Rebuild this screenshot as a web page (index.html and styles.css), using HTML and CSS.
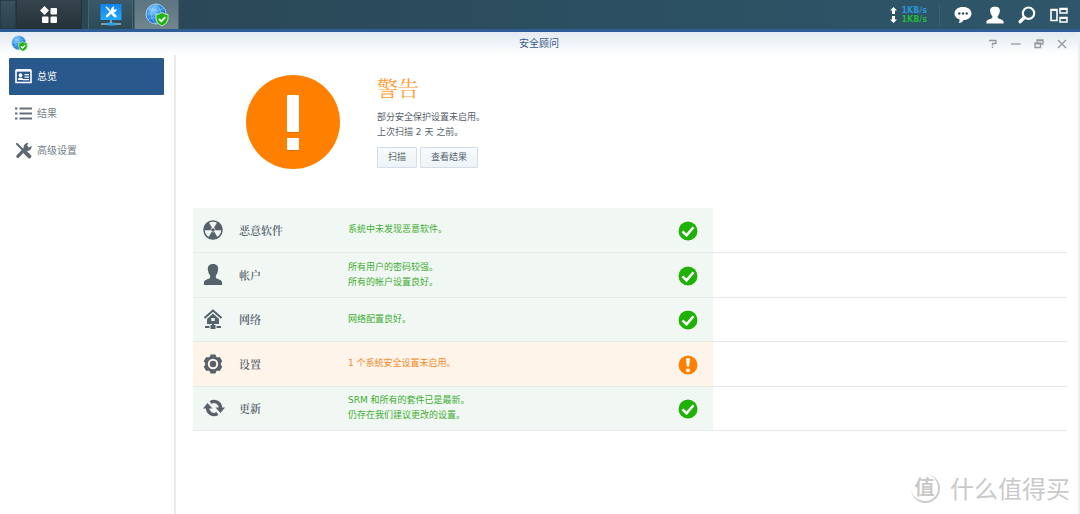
FILE: index.html
```html
<!DOCTYPE html>
<html lang="zh-CN">
<head>
<meta charset="utf-8">
<title>安全顾问</title>
<link rel="stylesheet" href="styles.css">
</head>
<body>
<svg class="defs" width="0" height="0" aria-hidden="true">
  <defs>
    <radialGradient id="globe" cx="35%" cy="30%" r="75%"><stop offset="0" stop-color="#8fd0fa"/><stop offset=".5" stop-color="#2f8fe6"/><stop offset="1" stop-color="#1163c4"/></radialGradient>
    <linearGradient id="screen" x1="0" y1="0" x2="0" y2="1"><stop offset="0" stop-color="#1183f0"/><stop offset="1" stop-color="#25a8fb"/></linearGradient>
    <symbol id="advisor" viewBox="0 0 24 24">
      <circle cx="11" cy="11" r="10" fill="url(#globe)" stroke="#b5dcf7" stroke-width=".8"/>
      <path d="M11 1v20M1 11h20M3 5.500q8 4 16 0M3 16.500q8-4 16 0M11 1q-10 10 0 20M11 1q10 10 0 20" fill="none" stroke="#9fd2f8" stroke-width=".5"/>
      <path d="M17 9.500q3 2 6 2v4.500q0 4.500-6 7-6-2.500-6-7v-4.500q3 0 6-2z" fill="#22b314" stroke="#dcf5d5" stroke-width=".8"/>
      <path d="M14 16l2.300 2.300 4-4.300" fill="none" stroke="#fff" stroke-width="1.800"/>
    </symbol>
    <symbol id="tools" viewBox="0 0 18 18">
      <path d="M2 2l6 6" stroke="currentColor" stroke-width="2.200" stroke-linecap="round"/>
      <path d="M11 11l4.200 4.200" stroke="currentColor" stroke-width="4.200" stroke-linecap="round"/>
      <path d="M3 15.200l9.500-9.700" stroke="currentColor" stroke-width="3.400" stroke-linecap="round"/>
      <path d="M17.500 4l-3 2-2-1.700 1.700-3.400a4.800 4.800 0 0 0-5 6l3 2.700A4.800 4.800 0 0 0 17.500 4z" fill="currentColor"/>
    </symbol>
    <symbol id="person" viewBox="0 0 20 22">
      <path d="M10 0c4.300 0 5.800 2.500 5.300 6.200-.3 2.600-1.200 4.500-2.300 5.800v2.500c1 1.500 6 2 6.500 4.500v3H.5v-3c.5-2.500 5.500-3 6.500-4.500V12C5.900 10.700 5 8.800 4.700 6.200 4.200 2.500 5.700 0 10 0z" fill="currentColor"/>
    </symbol>
    <symbol id="ok" viewBox="0 0 22 22">
      <circle cx="11" cy="11.500" r="10.500" fill="#e3e9e4"/><circle cx="11" cy="11" r="10.500" fill="#fff"/><circle cx="11" cy="11" r="9.500" fill="#1fb105"/>
      <path d="M5.500 11.300l4 4 7-8" fill="none" stroke="#fff" stroke-width="2.500"/>
    </symbol>
    <symbol id="warn" viewBox="0 0 22 22">
      <circle cx="11" cy="11.500" r="10.500" fill="#eee3da"/><circle cx="11" cy="11" r="10.500" fill="#fff"/><circle cx="11" cy="11" r="9.500" fill="#ff8000"/>
      <path d="M9 4.500q2-1 4 0l-.9 8.300H9.900z" fill="#fff"/><circle cx="11" cy="16.300" r="1.900" fill="#fff"/>
    </symbol>
  </defs>
</svg>

<header class="taskbar">
  <div class="taskbar-edge"></div>
  <button class="task task-menu" aria-label="主菜单">
    <svg width="18" height="18" viewBox="0 0 18 18" fill="#fff"><path d="M4.500 0L9 4.500 4.500 9 0 4.500z"/><rect x="10.500" y="2" width="6.500" height="6.500" rx="1"/><rect x="2" y="10.500" width="6.500" height="6.500" rx="1"/><rect x="10.500" y="10.500" width="6.500" height="6.500" rx="1"/></svg>
  </button>
  <button class="task task-network" aria-label="网络中心">
    <svg width="22" height="22" viewBox="0 0 22 22"><rect x=".5" y="0" width="21" height="16" fill="url(#screen)"/><use href="#tools" x="5" y="2" width="12" height="12" color="#fff"/><path d="M1 20h20" stroke="#9cb7c6" stroke-width="1.500"/><path d="M7 20h8" stroke="#25a3ed" stroke-width="3"/><path d="M11 16v3" stroke="#ddeaf0" stroke-width="1"/></svg>
  </button>
  <button class="task task-active" aria-label="安全顾问"><svg width="24" height="24"><use href="#advisor"/></svg></button>
  <div class="tray">
    <div class="speed">
      <span class="rate up"><svg width="7" height="7" viewBox="0 0 7 7"><path d="M3.500 0L7 3.500H5V7H2V3.500H0z" fill="#fff"/></svg>1KB/s</span>
      <span class="rate down"><svg width="7" height="7" viewBox="0 0 7 7"><path d="M3.500 7L0 3.500h2V0h3v3.500h2z" fill="#fff"/></svg>1KB/s</span>
    </div>
    <button class="tray-button" aria-label="通知"><svg width="18" height="18" viewBox="0 0 18 18"><path d="M9 1c5 0 8.500 2.700 8.500 6.500S14 14 9.500 14q-1 3-5 3 1.500-1.500 1-3.500C2.500 12.500.5 10.500.5 7.500.5 3.700 4 1 9 1z" fill="#fff"/><circle cx="5.300" cy="7.500" r="1.200" fill="#2c5062"/><circle cx="9" cy="7.500" r="1.200" fill="#2c5062"/><circle cx="12.700" cy="7.500" r="1.200" fill="#2c5062"/></svg></button>
    <button class="tray-button" aria-label="用户"><svg width="18" height="18" viewBox="0 0 20 22" preserveAspectRatio="none"><path d="M10 1c4.300 0 5.800 2.500 5.300 5.700-.3 2.600-1.200 4.500-2.300 5.800v2c1 1.500 6 2 6.500 4.500v2.500H.5V19c.5-2.500 5.500-3 6.500-4.500v-2C5.900 11.200 5 9.300 4.700 6.700 4.200 3.500 5.700 1 10 1z" fill="#fff"/></svg></button>
    <button class="tray-button" aria-label="搜索"><svg width="18" height="18" viewBox="0 0 18 18" fill="none" stroke="#fff"><circle cx="10.500" cy="7.200" r="5.700" stroke-width="2.200"/><path d="M6.200 11.500L2.200 15.700" stroke-width="3.400" stroke-linecap="round"/></svg></button>
    <button class="tray-button" aria-label="小工具"><svg width="18" height="18" viewBox="0 0 18 18" fill="none" stroke="#fff"><path d="M1 3.500h6v11H1z" stroke-width="1.600"/><path d="M10 2.500h7v4.500h-7zM10 11.500h7V16h-7z" stroke-width="1.500"/><path d="M10 3h7M10 12h7M1 4h6" stroke-width="1.800"/></svg></button>
  </div>
</header>

<div class="window">
  <div class="titlebar">
    <svg class="title-icon" width="17" height="17"><use href="#advisor"/></svg>
    <h1 class="title">安全顾问</h1>
    <div class="controls">
      <button class="control" aria-label="帮助"><svg width="10" height="10" viewBox="0 0 10 10"><path d="M1 1.500h7v3H4.500v2M4.500 7.500V9"/></svg></button>
      <button class="control" aria-label="最小化"><svg width="10" height="10" viewBox="0 0 10 10"><path d="M0 5h9.500"/></svg></button>
      <button class="control" aria-label="还原"><svg width="10" height="10" viewBox="0 0 10 10"><path d="M3 3V1h6v4H7M1 4h5.500v4.500H1zM1 4.800h5.500M3 1.500h6"/></svg></button>
      <button class="control" aria-label="关闭"><svg width="10" height="10" viewBox="0 0 10 10"><path d="M1 1l8 8M9 1L1 9"/></svg></button>
    </div>
  </div>

  <div class="body">
    <nav class="sidebar">
      <a class="nav-item selected" href="#overview"><svg width="17" height="17" viewBox="0 0 17 17"><path d="M1 2.500h15v12H1z" fill="none" stroke="#fff" stroke-width="1.600"/><path d="M1 2.300h15" stroke="#fff" stroke-width="2.400"/><circle cx="5.500" cy="7.200" r="1.900" fill="#fff"/><path d="M2.800 12q0-2.500 2.700-2.500T8.200 12zM9.500 6H14v1.300H9.500zM9.500 8.500H14v1.300H9.500zM8 11h6v1.200H8z" fill="#fff"/></svg>总览</a>
      <a class="nav-item" href="#results"><svg width="17" height="17" viewBox="0 0 17 17" fill="none" stroke="#66717c" stroke-width="2"><path d="M0 3.500h2.500M0 8.500h2.500M0 13.500h2.500M4.500 3.500H17M4.500 8.500H17M4.500 13.500H17"/></svg>结果</a>
      <a class="nav-item" href="#advanced"><svg width="17" height="17" color="#5d6873"><use href="#tools"/></svg>高级设置</a>
    </nav>

    <main class="content" id="overview">
      <section class="summary">
        <svg class="alert" width="94" height="94" viewBox="0 0 94 94"><circle cx="47" cy="47" r="47" fill="#ff8000"/><path d="M41 22h12v36H41zM41 65h12v11H41z" fill="#b9640f" opacity=".5"/><rect x="41" y="20" width="12" height="37" rx="1" fill="#fff"/><rect x="41" y="63" width="12" height="12" rx="1" fill="#fff"/></svg>
        <div class="summary-text">
          <h2 class="status">警告</h2>
          <p class="detail">部分安全保护设置未启用。<br>上次扫描 2 天 之前。</p>
          <div class="actions"><button class="button">扫描</button><button class="button">查看结果</button></div>
        </div>
      </section>

      <table class="checks">
        <tbody>
          <tr class="check">
            <td class="icon"><svg width="20" height="20" viewBox="0 0 20 20"><circle cx="10" cy="10" r="9" fill="#f1f8f3" stroke="currentColor" stroke-width="1.500"/><path d="M8.700 7.750L5.500 2.200A9 9 0 0 0 1 10h6.400A2.600 2.600 0 0 1 8.700 7.750zM11.300 7.750L14.500 2.200A9 9 0 0 1 19 10h-6.400a2.600 2.600 0 0 0-1.300-2.250zM8.700 12.250L5.500 17.800a9 9 0 0 0 9 0l-3.200-5.550a2.600 2.600 0 0 1-2.600 0z" fill="currentColor" stroke="currentColor" stroke-width=".6"/><circle cx="10" cy="10" r="1.800" fill="currentColor"/></svg></td>
            <th class="name" scope="row">恶意软件</th><td class="message">系统中未发现恶意软件。</td>
            <td class="mark"><svg width="22" height="22" role="img" aria-label="正常"><use href="#ok"/></svg></td><td class="rest"></td>
          </tr>
          <tr class="check">
            <td class="icon"><svg width="20" height="21"><use href="#person"/></svg></td>
            <th class="name" scope="row">帐户</th><td class="message">所有用户的密码较强。<br>所有的帐户设置良好。</td>
            <td class="mark"><svg width="22" height="22" role="img" aria-label="正常"><use href="#ok"/></svg></td><td class="rest"></td>
          </tr>
          <tr class="check">
            <td class="icon"><svg width="20" height="20" viewBox="0 0 20 20"><path d="M1.500 9L10 1.500 18.500 9" fill="none" stroke="currentColor" stroke-width="2"/><path d="M10 4.500l6 5.500v5H4v-5z" fill="currentColor"/><path d="M8.300 9h3.400v3H8.300z" fill="#f1f8f3"/><path d="M10 14v3M2 18h4.500M13.500 18H18" fill="none" stroke="currentColor" stroke-width="2"/><path d="M7.500 16h5v4h-5z" fill="currentColor"/></svg></td>
            <th class="name" scope="row">网络</th><td class="message">网络配置良好。</td>
            <td class="mark"><svg width="22" height="22" role="img" aria-label="正常"><use href="#ok"/></svg></td><td class="rest"></td>
          </tr>
          <tr class="check warning">
            <td class="icon"><svg width="20" height="20" viewBox="0 0 20 20"><path d="M7.500.5h5l.5 2 1.800 1 2-.5 2.500 4.300L17.900 9v2l1.400 1.700-2.500 4.300-2-.5-1.800 1-.5 2h-5l-.5-2-1.800-1-2 .5L.7 12.700 2.100 11V9L.7 7.300 3.200 3l2 .5 1.800-1z" fill="currentColor"/><circle cx="10" cy="10" r="4.200" fill="none" stroke="#fff4ea" stroke-width="2"/></svg></td>
            <th class="name" scope="row">设置</th><td class="message">1 个系统安全设置未启用。</td>
            <td class="mark"><svg width="22" height="22" role="img" aria-label="警告"><use href="#warn"/></svg></td><td class="rest"></td>
          </tr>
          <tr class="check">
            <td class="icon"><svg width="22" height="18" viewBox="0 0 22 18"><path d="M7.500 3.500A6.500 6.500 0 0 1 17.500 9M14.500 14.500A6.500 6.500 0 0 1 4.500 9" fill="none" stroke="currentColor" stroke-width="3.400"/><path d="M12.500 8.500H22L17.500 14zM0 9.500h9.500L4.500 4z" fill="currentColor"/></svg></td>
            <th class="name" scope="row">更新</th><td class="message">SRM 和所有的套件已是最新。<br>仍存在我们建议更改的设置。</td>
            <td class="mark"><svg width="22" height="22" role="img" aria-label="正常"><use href="#ok"/></svg></td><td class="rest"></td>
          </tr>
        </tbody>
      </table>
    </main>
  </div>
</div>
<div class="watermark"><span class="seal">值</span><span>什么值得买</span></div>
</body>
</html>
```
FILE: styles.css
```css
* { box-sizing: border-box; }

body {
  margin: 0;
  min-height: 100vh;
  display: flex;
  flex-direction: column;
  background: #fff;
  color: #56616c;
  font: 9px/15px "DejaVu Sans", "Noto Sans CJK SC", sans-serif;
}

svg { display: block; flex: none; }
button { font: inherit; color: inherit; cursor: pointer; }
h1, h2, p { margin: 0; font-weight: normal; }
.defs { position: absolute; }

.taskbar {
  display: flex;
  height: 32px;
  border-bottom: 3px solid #2d5c96;
  background: linear-gradient(90deg, #2a4553, #2c5062 60%, #2f566a);
}
.taskbar-edge {
  width: 16px;
  border: 1px solid #243c48;
  background: linear-gradient(#39525e, #2a424e);
}
.task {
  display: flex;
  align-items: center;
  justify-content: center;
  padding: 0;
  border: 1px solid #486370;
  border-width: 0 1px;
  background: linear-gradient(#3c5967, #2c4a58);
}
.task-menu {
  width: 66px;
  border-color: #22333c;
  background: linear-gradient(#36444d, #253139);
}
.task-network { width: 45px; margin-left: 6px; }
.task-active { width: 45px; margin-left: 1px; background: linear-gradient(#5b7581, #71858e); }

.tray {
  display: flex;
  align-items: center;
  margin-left: auto;
  padding-right: 12px;
  gap: 14px;
}
.speed {
  display: flex;
  flex-direction: column;
  height: 22px;
  justify-content: center;
  padding-right: 12px;
  border-right: 1px solid #3a6072;
  font: bold 8px/9px "DejaVu Sans", sans-serif;
}
.rate { display: flex; align-items: center; gap: 4px; }
.up { color: #2c93d2; }
.down { color: #24b53b; }
.tray-button { padding: 0; border: 0; background: none; color: #fff; }

.window {
  flex: 1;
  display: flex;
  flex-direction: column;
  border-right: 2px solid #eceff2;
}
.titlebar {
  display: grid;
  grid-template-columns: 1fr auto 1fr;
  align-items: center;
  height: 23px;
  padding: 0 11px;
  background: linear-gradient(#e3eaf2, #fff);
}
.title { color: #34578c; font-size: 10px; line-height: 16px; }
.controls { display: flex; justify-content: flex-end; gap: 13px; }
.control { padding: 0; border: 0; background: none; }
.control path { fill: none; stroke: #93999f; stroke-width: 1.3; }

.body { flex: 1; display: flex; }
.sidebar {
  width: 176px;
  padding: 3px 10px 0 9px;
  border-right: 2px solid #ebebeb;
}
.nav-item {
  display: flex;
  align-items: center;
  gap: 5px;
  height: 37px;
  padding-left: 6px;
  border-radius: 1px;
  color: #737d86;
  font-size: 10px;
  text-decoration: none;
}
.selected { background: #29588c; color: #fff; }

.content { flex: 1; padding: 18px 11px 0 17px; }
.summary { display: flex; gap: 37px; height: 135px; padding: 2px 0 0 53px; }
.status {
  color: #ff9a2e;
  font: 400 21px/24px "Noto Serif CJK SC", "Noto Sans CJK SC", serif;
}
.detail { margin-top: 11px; }
.actions { display: flex; gap: 3px; margin-top: 7px; }
.button {
  height: 21px;
  padding: 0 10px;
  border: 1px solid #d3dee9;
  border-radius: 1px;
  background: linear-gradient(#f8fbfd, #edf3f8);
}

.checks { width: 100%; border-collapse: collapse; table-layout: fixed; }
.check { height: 44px; background: linear-gradient(#f1f8f3, #f1f8f3) no-repeat; background-size: 520px 100%; }
.check:nth-child(even) { height: 45px; }
.warning { background-image: linear-gradient(#fff4ea, #fff4ea); }
.check td, .check th { padding: 0; border-bottom: 1px solid #e5e9ec; text-align: left; }
.check .icon { width: 46px; padding-left: 10px; }
.check .name {
  width: 109px;
  font: 600 11px/16px "Noto Serif CJK SC", "Noto Sans CJK SC", serif;
}
.message { width: 325px; color: #40ac32; }
.warning .message { color: #ee8a2b; }
.check .mark { width: 40px; padding: 2px 0 0 4px; }

.watermark {
  position: absolute;
  right: 10px;
  bottom: 10px;
  display: flex;
  align-items: center;
  gap: 10px;
  color: #c9c9c9;
  font: 24px/32px "Noto Sans CJK SC", sans-serif;
}
.seal {
  width: 29px;
  height: 29px;
  border-right: 2px solid #ccc;
  border-bottom: 2px solid #ccc;
  border-radius: 50%;
  font-size: 20px;
  font-weight: bold;
  line-height: 26px;
  text-align: center;
}
```
